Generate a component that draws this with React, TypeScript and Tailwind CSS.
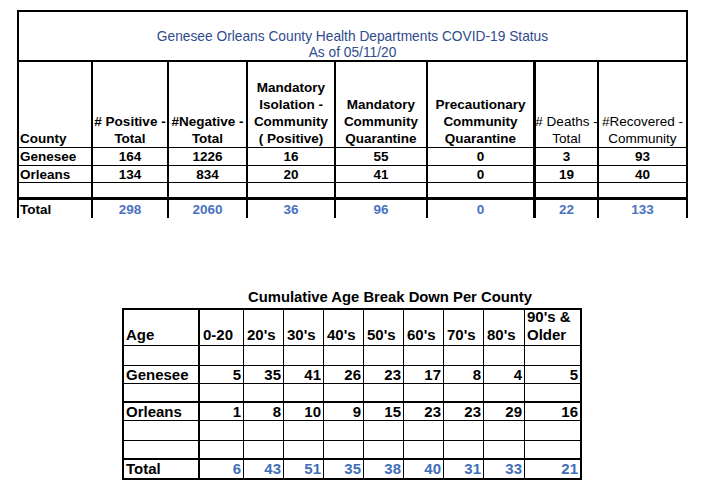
import React from "react";

const topW = [
  "w-[74px] border-r-2",
  "w-[76px] border-r-2",
  "w-[79px] border-r-2",
  "w-[88px] border-r-2",
  "w-[92px] border-r-2",
  "w-[108px] border-r-[3px]",
  "w-[63px] border-r-2",
  "w-[87px]",
];

const topRows: { label: string; vals: string[]; h: string; b: string; blue?: boolean }[] = [
  { label: "Genesee", vals: ["164", "1226", "16", "55", "0", "3", "93"], h: "h-[18px]", b: "border-b" },
  { label: "Orleans", vals: ["134", "834", "20", "41", "0", "19", "40"], h: "h-[17px]", b: "border-b" },
  { label: "", vals: ["", "", "", "", "", "", ""], h: "h-[17px]", b: "border-b-[3px]" },
  { label: "Total", vals: ["298", "2060", "36", "96", "0", "22", "133"], h: "h-[18px]", b: "", blue: true },
];

const headers: { lines: string[]; bold: boolean }[] = [
  { lines: ["# Positive -", "Total"], bold: true },
  { lines: ["#Negative -", "Total"], bold: true },
  { lines: ["Mandatory", "Isolation -", "Community", "( Positive)"], bold: true },
  { lines: ["Mandatory", "Community", "Quarantine"], bold: true },
  { lines: ["Precautionary", "Community", "Quarantine"], bold: true },
  { lines: ["# Deaths -", "Total"], bold: false },
  { lines: ["#Recovered -", "Community"], bold: false },
];

const ageW = [
  "w-[76px] border-r-2",
  "w-[44px] border-r",
  "w-[40px] border-r",
  "w-[40px] border-r",
  "w-[40px] border-r",
  "w-[40px] border-r",
  "w-[40px] border-r",
  "w-[40px] border-r",
  "w-[41px] border-r",
  "w-[55px]",
];

const ageHead = ["0-20", "20's", "30's", "40's", "50's", "60's", "70's", "80's"];

const ageRows: { label: string; vals: string[]; h: string; b: string; blue?: boolean }[] = [
  { label: "", vals: [], h: "h-[20px]", b: "border-b" },
  { label: "Genesee", vals: ["5", "35", "41", "26", "23", "17", "8", "4", "5"], h: "h-[18px]", b: "border-b" },
  { label: "", vals: [], h: "h-[19px]", b: "border-b-2" },
  { label: "Orleans", vals: ["1", "8", "10", "9", "15", "23", "23", "29", "16"], h: "h-[18px]", b: "border-b" },
  { label: "", vals: [], h: "h-[20px]", b: "border-b" },
  { label: "", vals: [], h: "h-[19px]", b: "border-b-2" },
  { label: "Total", vals: ["6", "43", "51", "35", "38", "40", "31", "33", "21"], h: "h-[18px]", b: "", blue: true },
];

export default function App() {
  return (
    <div className="w-[707px] h-[492px] bg-white overflow-hidden text-black" style={{ fontFamily: '"Liberation Sans", Arial, sans-serif' }}>
      {/* Top table */}
      <div className="ml-[17px] mt-[10px] w-[671px] border-2 border-b-0 border-black">
        <div className="h-[50px] border-b-2 border-black flex flex-col items-center justify-end pb-0 text-[13.75px] leading-[16px] text-[#2f4b8c]">
          <div className="translate-y-[1px]">Genesee Orleans County Health Departments COVID-19 Status</div>
          <div className="translate-y-[1px]">As of 05/11/20</div>
        </div>
        <div className="flex h-[86px] border-b border-black text-[13.5px] leading-[17px]">
          <div className={`${topW[0]} border-black flex items-end pl-[1px] font-bold`}>County</div>
          {headers.map((h, i) => (
            <div key={i} className={`${topW[i + 1]} border-black flex flex-col items-center justify-end text-center whitespace-nowrap ${h.bold ? "font-bold" : "font-normal"}`}>
              {h.lines.map((l, j) => (
                <div key={j}>{l}</div>
              ))}
            </div>
          ))}
        </div>
        {topRows.map((r, ri) => (
          <div key={ri} className={`flex ${r.h} ${r.b} border-black text-[13.5px] leading-[17px] font-bold`}>
            <div className={`${topW[0]} border-black flex items-center pl-[1px]`}>{r.label}</div>
            {r.vals.map((v, i) => (
              <div key={i} className={`${topW[i + 1]} border-black flex items-center justify-center ${r.blue ? "text-[#4a72c0]" : ""}`}>
                {v}
              </div>
            ))}
          </div>
        ))}
      </div>

      {/* Bottom title */}
      <div className="mt-[70px] ml-[248px] h-[20px] text-[14.8px] leading-[18px] font-bold whitespace-nowrap">
        Cumulative Age Break Down Per County
      </div>

      {/* Bottom table */}
      <div className="ml-[122px] w-[460px] border-2 border-black text-[15px] leading-[18px] font-bold">
        <div className="flex h-[36px] border-b border-black">
          <div className={`${ageW[0]} border-black flex items-end pl-[2px] pb-[1px]`}>Age</div>
          {ageHead.map((h, i) => (
            <div key={i} className={`${ageW[i + 1]} border-black flex items-end pl-[3px] pb-[1px] whitespace-nowrap`}>
              {h}
            </div>
          ))}
          <div className={`${ageW[9]} border-black flex flex-col justify-end pl-[2px] pb-[1px]`}>
            <div>90's &amp;</div>
            <div>Older</div>
          </div>
        </div>
        {ageRows.map((r, ri) => (
          <div key={ri} className={`flex ${r.h} ${r.b} border-black`}>
            <div className={`${ageW[0]} border-black flex items-center pl-[2px]`}>{r.label}</div>
            {Array.from({ length: 9 }).map((_, i) => (
              <div key={i} className={`${ageW[i + 1]} border-black flex items-center justify-end pr-[2px] ${r.blue ? "text-[#3f6fb8]" : ""}`}>
                {r.vals[i] ?? ""}
              </div>
            ))}
          </div>
        ))}
      </div>
    </div>
  );
}
